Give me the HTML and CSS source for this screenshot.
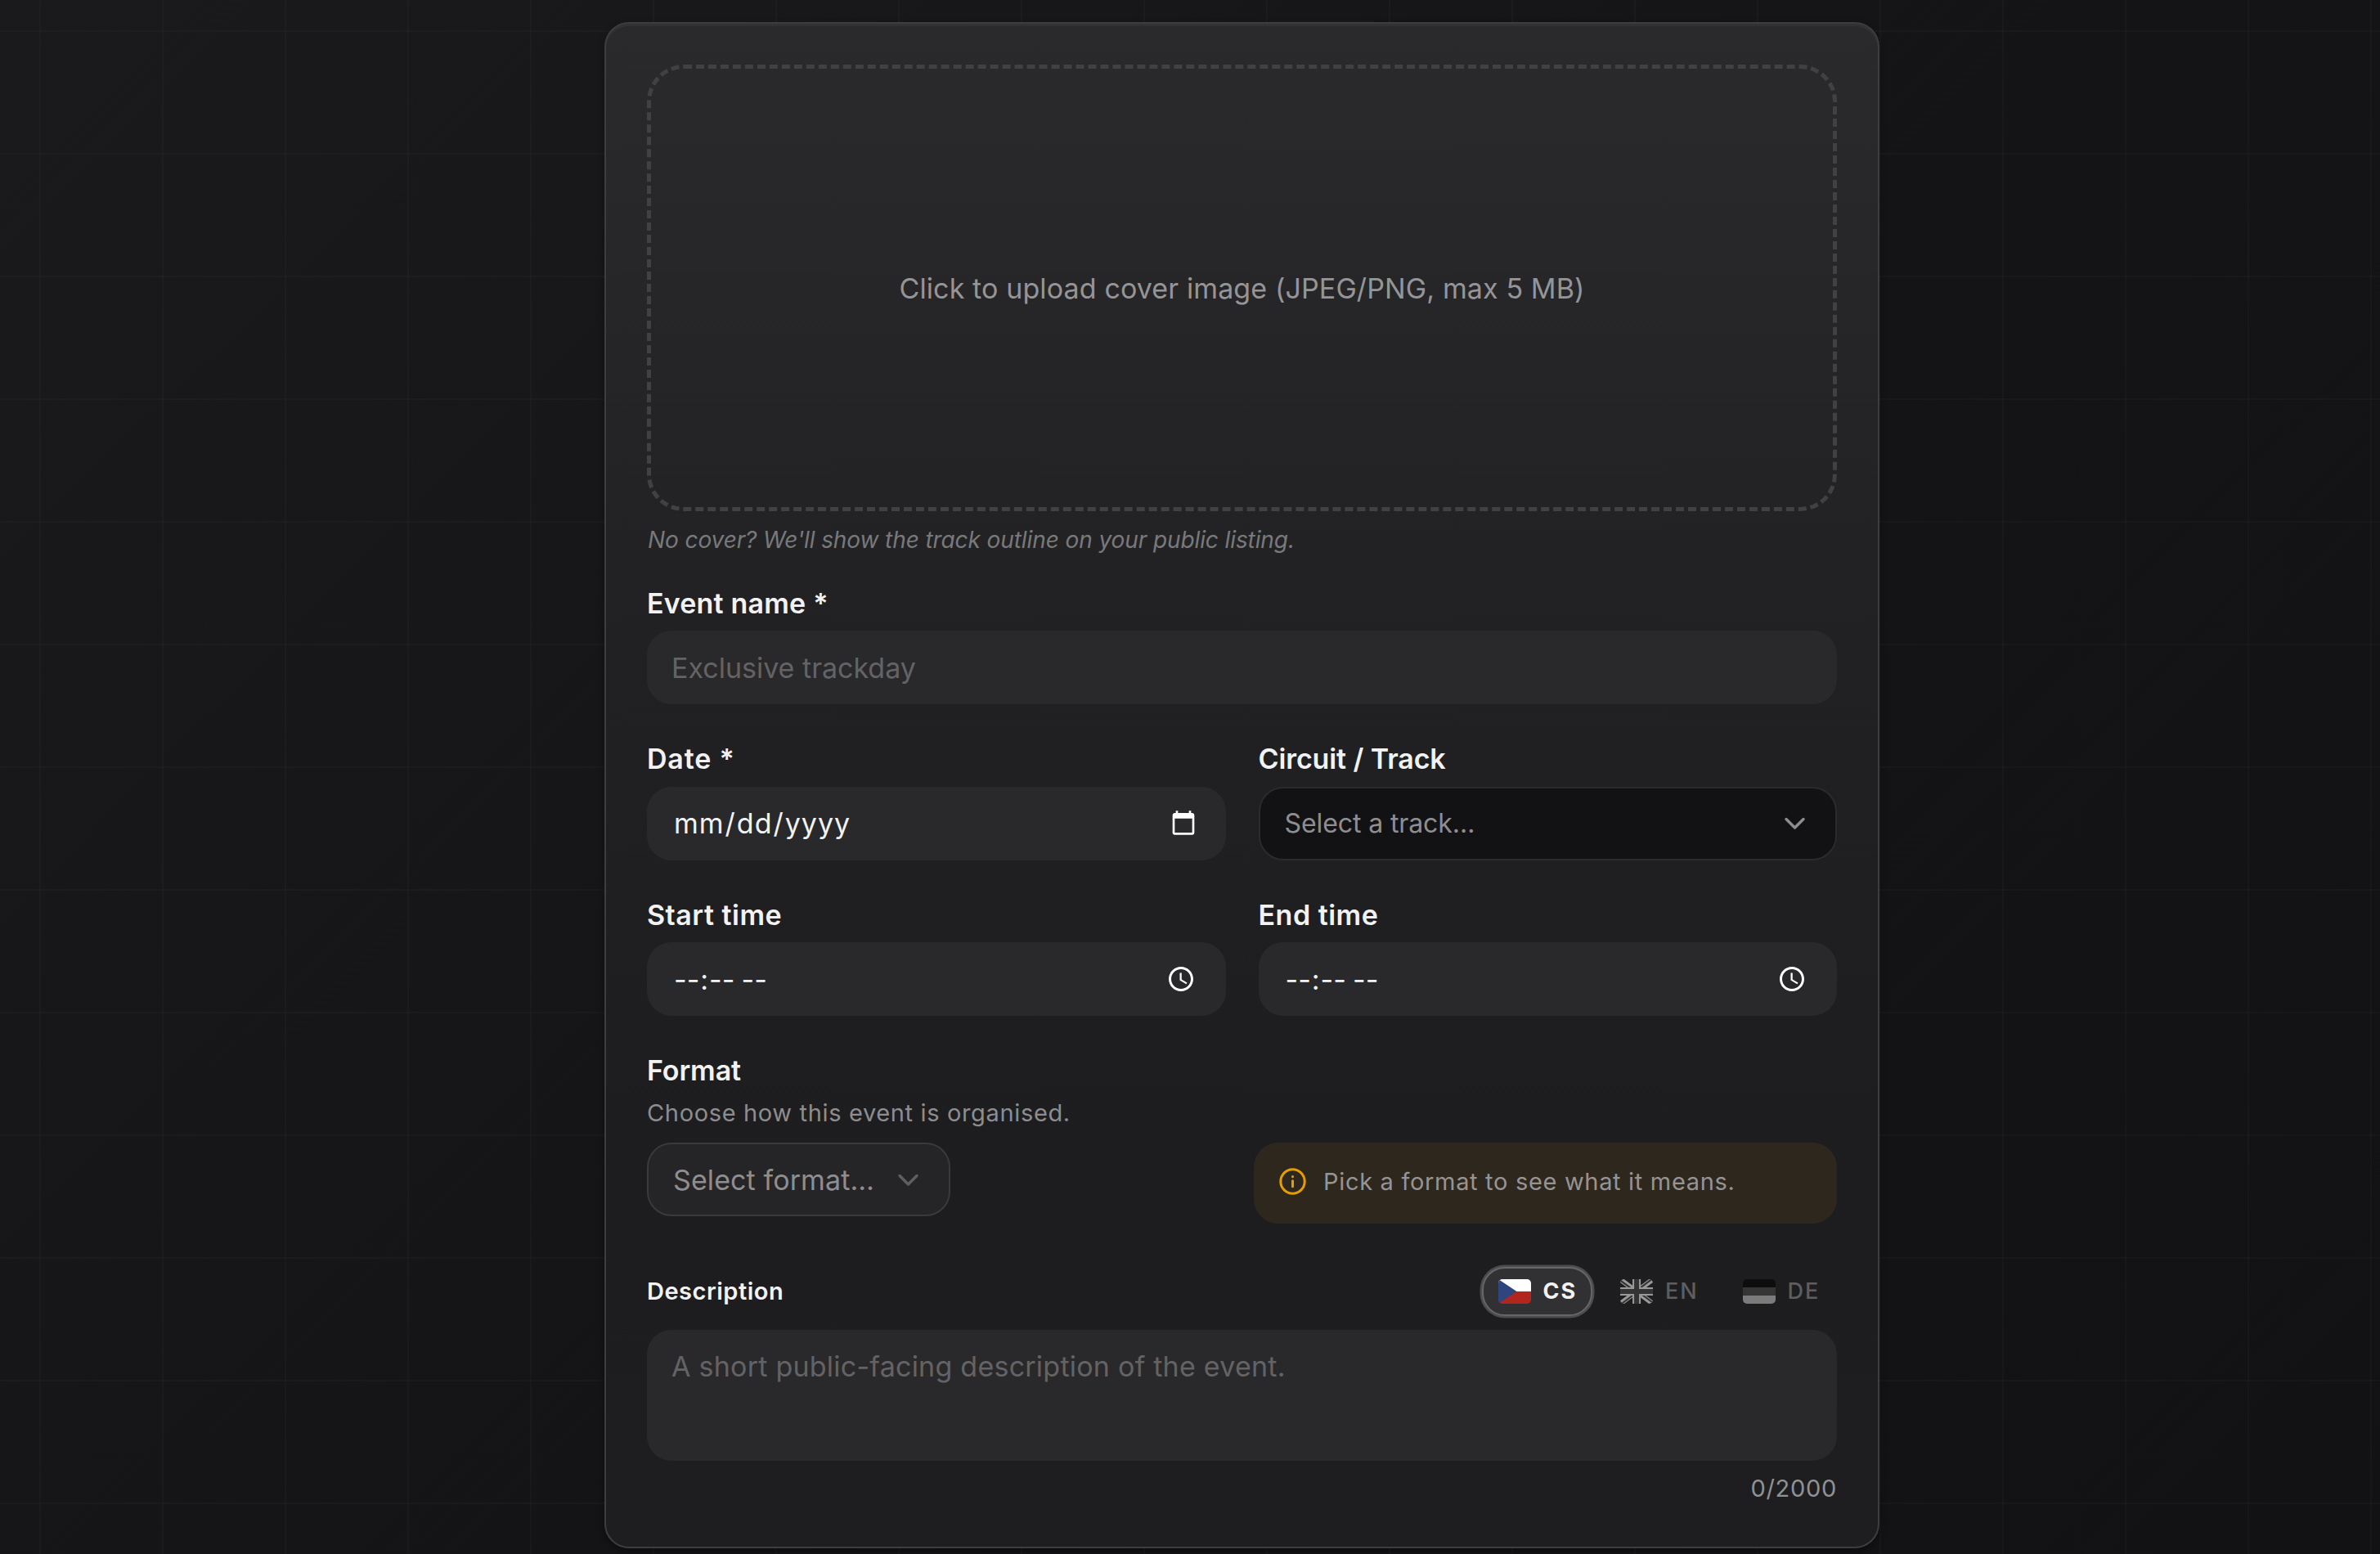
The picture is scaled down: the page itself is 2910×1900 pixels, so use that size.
FILE: index.html
```html
<!DOCTYPE html>
<html lang="en">
<head>
  <meta charset="UTF-8">
  <title>New event</title>
  <link rel="stylesheet" href="styles.css">
</head>
<body>
  <main class="page">
    <form class="card">
      <div class="cover">
        <span class="cover-text">Click to upload cover image (JPEG/PNG, max 5 MB)</span>
      </div>
      <p class="cover-hint">No cover? We'll show the track outline on your public listing.</p>

      <div class="fields">
        <div class="field">
          <label class="label" for="name">Event name *</label>
          <input class="input" id="name" type="text" placeholder="Exclusive trackday">
        </div>

        <div class="row">
          <div class="field">
            <label class="label label-date" for="date">Date *</label>
            <input class="input input-date" id="date" type="date">
          </div>
          <div class="field">
            <span class="label label-track">Circuit / Track</span>
            <button class="select select-track" type="button">
              <span>Select a track…</span>
              <svg class="chevron" viewBox="0 0 35 35"><path d="M7 12.5l10.5 10.5L28 12.5"/></svg>
            </button>
          </div>
        </div>

        <div class="row">
          <div class="field">
            <label class="label label-time" for="start">Start time</label>
            <input class="input input-time" id="start" type="time">
          </div>
          <div class="field">
            <label class="label label-time" for="end">End time</label>
            <input class="input input-time" id="end" type="time">
          </div>
        </div>

        <div class="format">
          <span class="label label-format">Format</span>
          <p class="format-sub">Choose how this event is organised.</p>
          <div class="format-row">
            <button class="select select-format" type="button">
              <span>Select format…</span>
              <svg class="chevron" viewBox="0 0 35 35"><path d="M7 12.5l10.5 10.5L28 12.5"/></svg>
            </button>
            <div class="note">
              <svg class="note-icon" viewBox="0 0 35 35">
                <circle cx="17.5" cy="17.5" r="14.7"/>
                <path d="M17.5 16.8v7M17.5 11.6v.1"/>
              </svg>
              <span>Pick a format to see what it means.</span>
            </div>
          </div>
        </div>
      </div>

      <div class="desc-head">
        <label class="desc-label" for="desc">Description</label>
        <div class="langs">
          <button class="lang active" type="button">
            <svg class="flag" viewBox="0 0 640 480">
              <path fill="#fff" d="M0 0h640v240H0z"/>
              <path fill="#b3261e" d="M0 240h640v240H0z"/>
              <path fill="#2f457e" d="M360 240 0 0v480z"/>
            </svg>
            <span>CS</span>
          </button>
          <button class="lang" type="button">
            <svg class="flag" viewBox="0 0 640 480">
              <path fill="#012169" d="M0 0h640v480H0z"/>
              <path fill="#fff" d="m75 0 244 181L562 0h78v62L400 241l240 178v61h-80L320 301 81 480H0v-60l239-178L0 64V0z"/>
              <path fill="#c8223a" d="m424 281 216 159v40L369 281zm-184 20 6 35L54 480H0zM640 0v3L391 191l2-44L590 0zM0 0l239 176h-60L0 42z"/>
              <path fill="#fff" d="M241 0v480h160V0zM0 160v160h640V160z"/>
              <path fill="#c8223a" d="M0 193v96h640v-96zM273 0v480h96V0z"/>
            </svg>
            <span>EN</span>
          </button>
          <button class="lang" type="button">
            <svg class="flag" viewBox="0 0 640 480">
              <path fill="#000" d="M0 0h640v160H0z"/>
              <path fill="#e62020" d="M0 160h640v160H0z"/>
              <path fill="#fc0" d="M0 320h640v160H0z"/>
            </svg>
            <span>DE</span>
          </button>
        </div>
      </div>
      <textarea class="input textarea" id="desc" placeholder="A short public-facing description of the event."></textarea>
      <div class="counter">0/2000</div>
    </form>
  </main>
</body>
</html>
```
FILE: styles.css
```css
* {
  box-sizing: border-box;
}
html {
  color-scheme: dark;
}
body {
  margin: 0;
  height: 1900px;
  overflow: hidden;
  color: #f2f2f2;
  font-family: Inter, "Liberation Sans", sans-serif;
  background-color: #121214;
  background-image:
    linear-gradient(to right, rgba(255, 255, 255, 0.018) 2px, transparent 2px),
    linear-gradient(to bottom, rgba(255, 255, 255, 0.018) 2px, transparent 2px),
    linear-gradient(135deg, #1a1a1c 0%, #141416 55%, #121214 100%);
  background-size: 150px 150px, 150px 150px, 100% 100%;
  background-position: 48px 0, 0 37px, 0 0;
}
button, input, textarea {
  font-family: inherit;
  margin: 0;
}
p {
  margin: 0;
}
.page {
  display: flex;
  justify-content: center;
  padding: 27px 0 0 127px;
}
.card {
  width: 1559px;
  height: 1866px;
  padding: 50px;
  border: 2px solid #3d3d3f;
  border-radius: 30px;
  background: linear-gradient(to bottom, #2a2a2c 0%, #212123 40%, #1d1d1f 75%, #1e1e20 100%);
  box-shadow: inset 0 3px 0 rgba(255, 255, 255, 0.04), 0 4px 10px rgba(0, 0, 0, 0.35);
}

/* cover upload */
.cover {
  height: 546px;
  display: flex;
  align-items: center;
  justify-content: center;
  border: 5px dashed #414143;
  border-radius: 45px;
}
.cover-text {
  font-size: 34px;
  letter-spacing: 0.12px;
  color: #959597;
}
.cover-hint {
  margin-top: 15px;
  padding-left: 1px;
  font-size: 28px;
  line-height: 40px;
  letter-spacing: -0.1px;
  font-style: italic;
  color: #79797b;
}

/* fields */
.fields {
  margin-top: 36.5px;
  display: flex;
  flex-direction: column;
  gap: 46px;
}
.row {
  display: grid;
  grid-template-columns: 1fr 1fr;
  gap: 40px;
}
.label {
  display: block;
  height: 42px;
  margin-bottom: 12.5px;
  font-size: 34px;
  line-height: 42px;
  font-weight: 600;
  letter-spacing: 0.2px;
}
.label-date {
  letter-spacing: 0.8px;
}
.label-track {
  letter-spacing: -0.1px;
}
.label-time {
  letter-spacing: 0.5px;
}
.label-format {
  margin-bottom: 10px;
  letter-spacing: -0.1px;
}
.input {
  display: block;
  width: 100%;
  height: 90px;
  padding: 0 30px;
  border: none;
  border-radius: 30px;
  background-color: #29292b;
  color: #f2f2f2;
  font-size: 34px;
}
.input::placeholder {
  color: #636365;
}
.input-date {
  padding: 0 33px 0 32px;
  letter-spacing: 1px;
}
.input-time {
  padding: 0 34px 0 32px;
  word-spacing: 4px;
}
.select {
  display: flex;
  align-items: center;
  justify-content: space-between;
  height: 90px;
  padding: 0 32px 0 30px;
  border-radius: 30px;
  color: #8e8e90;
}
.select-track {
  width: 100%;
  background-color: #121214;
  border: 2px solid #2b2b2d;
  font-size: 32px;
  letter-spacing: -0.1px;
}
.select-format {
  width: 371px;
  background-color: #252527;
  border: 2px solid #3a3a3c;
  font-size: 34px;
  letter-spacing: 0.1px;
}
.chevron {
  width: 35px;
  height: 35px;
  fill: none;
  stroke: #8e8e90;
  stroke-width: 3.4;
  stroke-linecap: round;
  stroke-linejoin: round;
}
.select-format .chevron {
  stroke: #5f5f61;
}
.format-sub {
  font-size: 29px;
  line-height: 42px;
  letter-spacing: 0.65px;
  color: #8d8d8f;
}
.format-row {
  display: flex;
  justify-content: space-between;
  align-items: flex-start;
  margin-top: 15px;
}
.note {
  width: 713px;
  height: 99px;
  padding: 0 30px 4px;
  display: flex;
  align-items: center;
  gap: 20px;
  border-radius: 30px;
  background-color: #2e271e;
  color: #969493;
  font-size: 29px;
  letter-spacing: 0.68px;
}
.note-icon {
  width: 35px;
  height: 35px;
  fill: none;
  stroke: #e69d00;
  stroke-width: 3;
  stroke-linecap: round;
}

/* description */
.desc-head {
  display: flex;
  align-items: center;
  justify-content: space-between;
  height: 60px;
  margin-top: 52.5px;
}
.desc-label {
  font-size: 29px;
  font-weight: 600;
  letter-spacing: 0.5px;
}
.langs {
  display: flex;
  gap: 14.5px;
}
.lang {
  display: flex;
  align-items: center;
  gap: 15px;
  width: 135px;
  height: 60px;
  padding: 0 17.5px;
  border: 2px solid transparent;
  border-radius: 28px;
  background: none;
  color: #5e5e60;
  font-size: 27px;
  font-weight: 500;
  letter-spacing: 2px;
}
.lang.active {
  color: #f2f2f2;
  font-weight: 700;
  background-color: #313133;
  border-color: #666668;
  box-shadow: 0 0 0 2.5px #4c4c4e;
}
.flag {
  flex: none;
  width: 40px;
  height: 30px;
  border-radius: 5px;
  filter: grayscale(1);
  opacity: 0.55;
}
.lang.active .flag {
  filter: none;
  opacity: 1;
}
.textarea {
  height: 160px;
  margin-top: 17.5px;
  padding: 20px 30px;
  line-height: 49px;
  letter-spacing: 0.24px;
  resize: none;
}
.counter {
  margin-top: 14px;
  font-size: 29px;
  line-height: 40px;
  letter-spacing: 0.7px;
  text-align: right;
  color: #919193;
}
```
